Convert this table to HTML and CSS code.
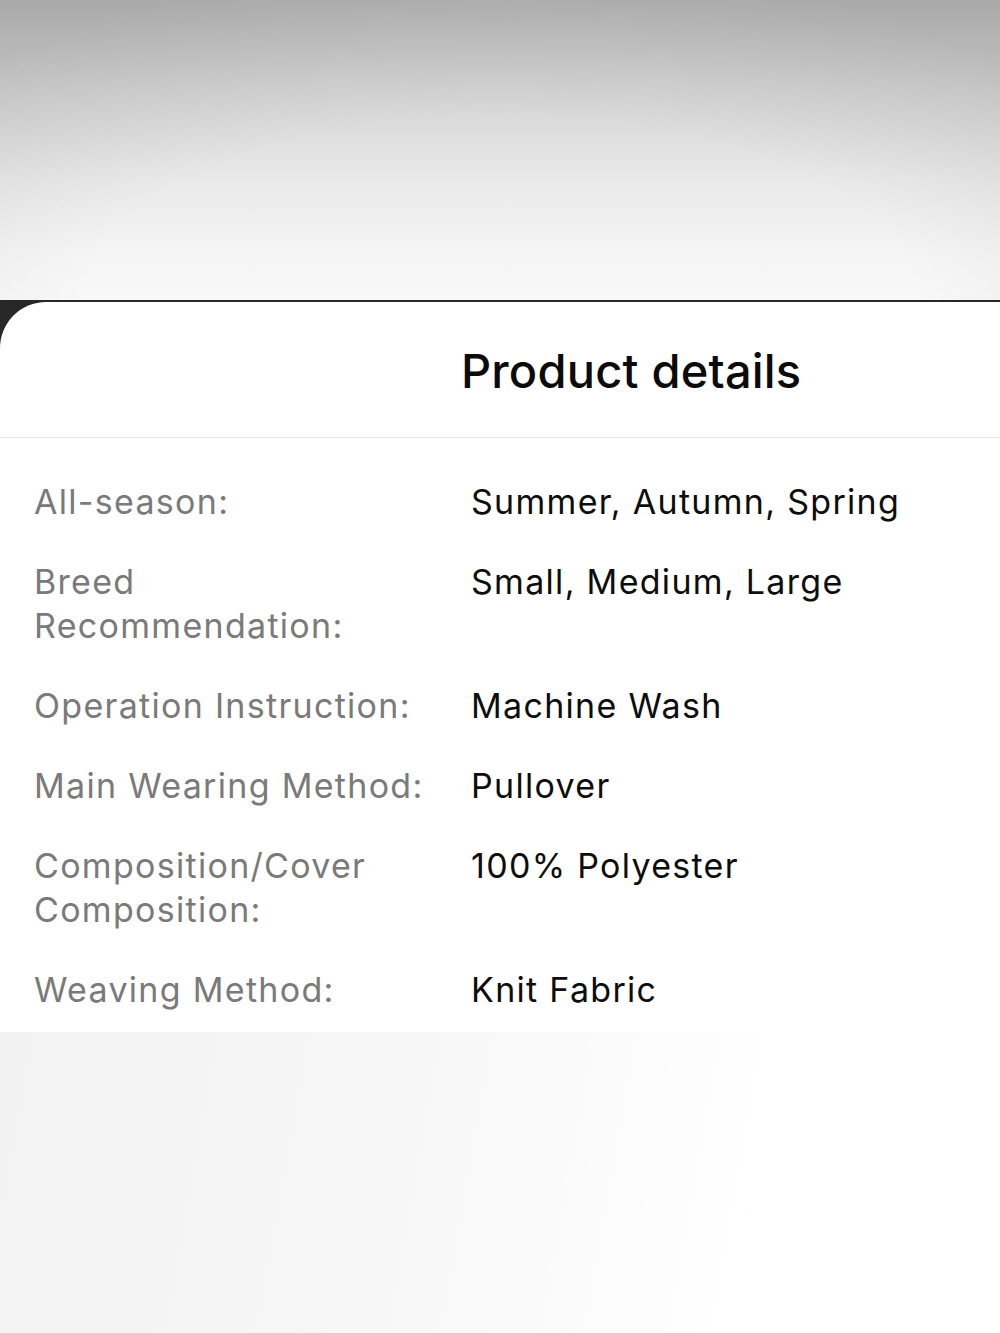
FILE: index.html
```html
<!DOCTYPE html>
<html lang="en">
<head>
    <meta charset="UTF-8">
    <meta name="viewport" content="width=device-width, initial-scale=1.0">
    <title>Product details</title>
    <link rel="stylesheet" href="styles.css">
</head>
<body>
    <div class="backdrop"></div>

    <div class="stage">
        <section class="sheet">
            <header class="sheet-header">
                <h1 class="sheet-title">Product details</h1>
            </header>

            <dl class="details">
                <div class="row">
                    <dt>All-season:</dt>
                    <dd>Summer, Autumn, Spring</dd>
                </div>
                <div class="row">
                    <dt>Breed Recommendation:</dt>
                    <dd>Small, Medium, Large</dd>
                </div>
                <div class="row">
                    <dt>Operation Instruction:</dt>
                    <dd>Machine Wash</dd>
                </div>
                <div class="row">
                    <dt>Main Wearing Method:</dt>
                    <dd>Pullover</dd>
                </div>
                <div class="row">
                    <dt>Composition/Cover Composition:</dt>
                    <dd>100% Polyester</dd>
                </div>
                <div class="row">
                    <dt>Weaving Method:</dt>
                    <dd>Knit Fabric</dd>
                </div>
            </dl>
        </section>
    </div>

    <div class="below"></div>
</body>
</html>
```

FILE: styles.css
```css
body {
    margin: 0;
    padding: 0;
    font-family: Inter, "Noto Sans", sans-serif;
    background-color: #fff;
    height: 1333px;
    display: flex;
    flex-direction: column;
    overflow: hidden;
}

/* blurred page behind the sheet */

.backdrop {
    height: 300px;
    background:
        radial-gradient(ellipse 75% 110% at 50% 100%, rgba(255,255,255,0) 55%, rgba(0,0,0,.08) 100%),
        linear-gradient(180deg, #b8b8b8 0%, #d3d3d3 30%, #e9e9e9 60%, #f5f5f5 85%, #f8f8f8 100%);
}

.stage {
    background-color: #272727;
    padding-top: 2px;
}

/* sheet */

.sheet {
    background-color: #fff;
    border-top-left-radius: 46px;
}

.sheet-header {
    height: 135px;
    border-bottom: 1px solid #e4e4e4;
    display: flex;
    align-items: center;
    padding-left: 461px;
}

.sheet-title {
    margin: 0;
    padding-top: 2px;
    font-size: 47px;
    font-weight: 500;
    color: #0b0b0b;
    letter-spacing: 0.2px;
}

.details {
    margin: 0;
    padding: 42px 0 20px 34px;
    display: flex;
    flex-direction: column;
    gap: 36px;
}

.row {
    display: grid;
    grid-template-columns: 401px 1fr;
    column-gap: 36px;
    font-size: 34px;
    line-height: 44px;
    letter-spacing: 1.3px;
}

.row dt {
    color: #7a7a7a;
}

.row dd {
    margin: 0;
    color: #0d0d0d;
}

/* blurred page below the sheet */

.below {
    flex: 1;
    background: linear-gradient(100deg, #f2f2f2 0%, #f6f6f6 35%, #fafafa 55%, #fff 75%);
}
```
